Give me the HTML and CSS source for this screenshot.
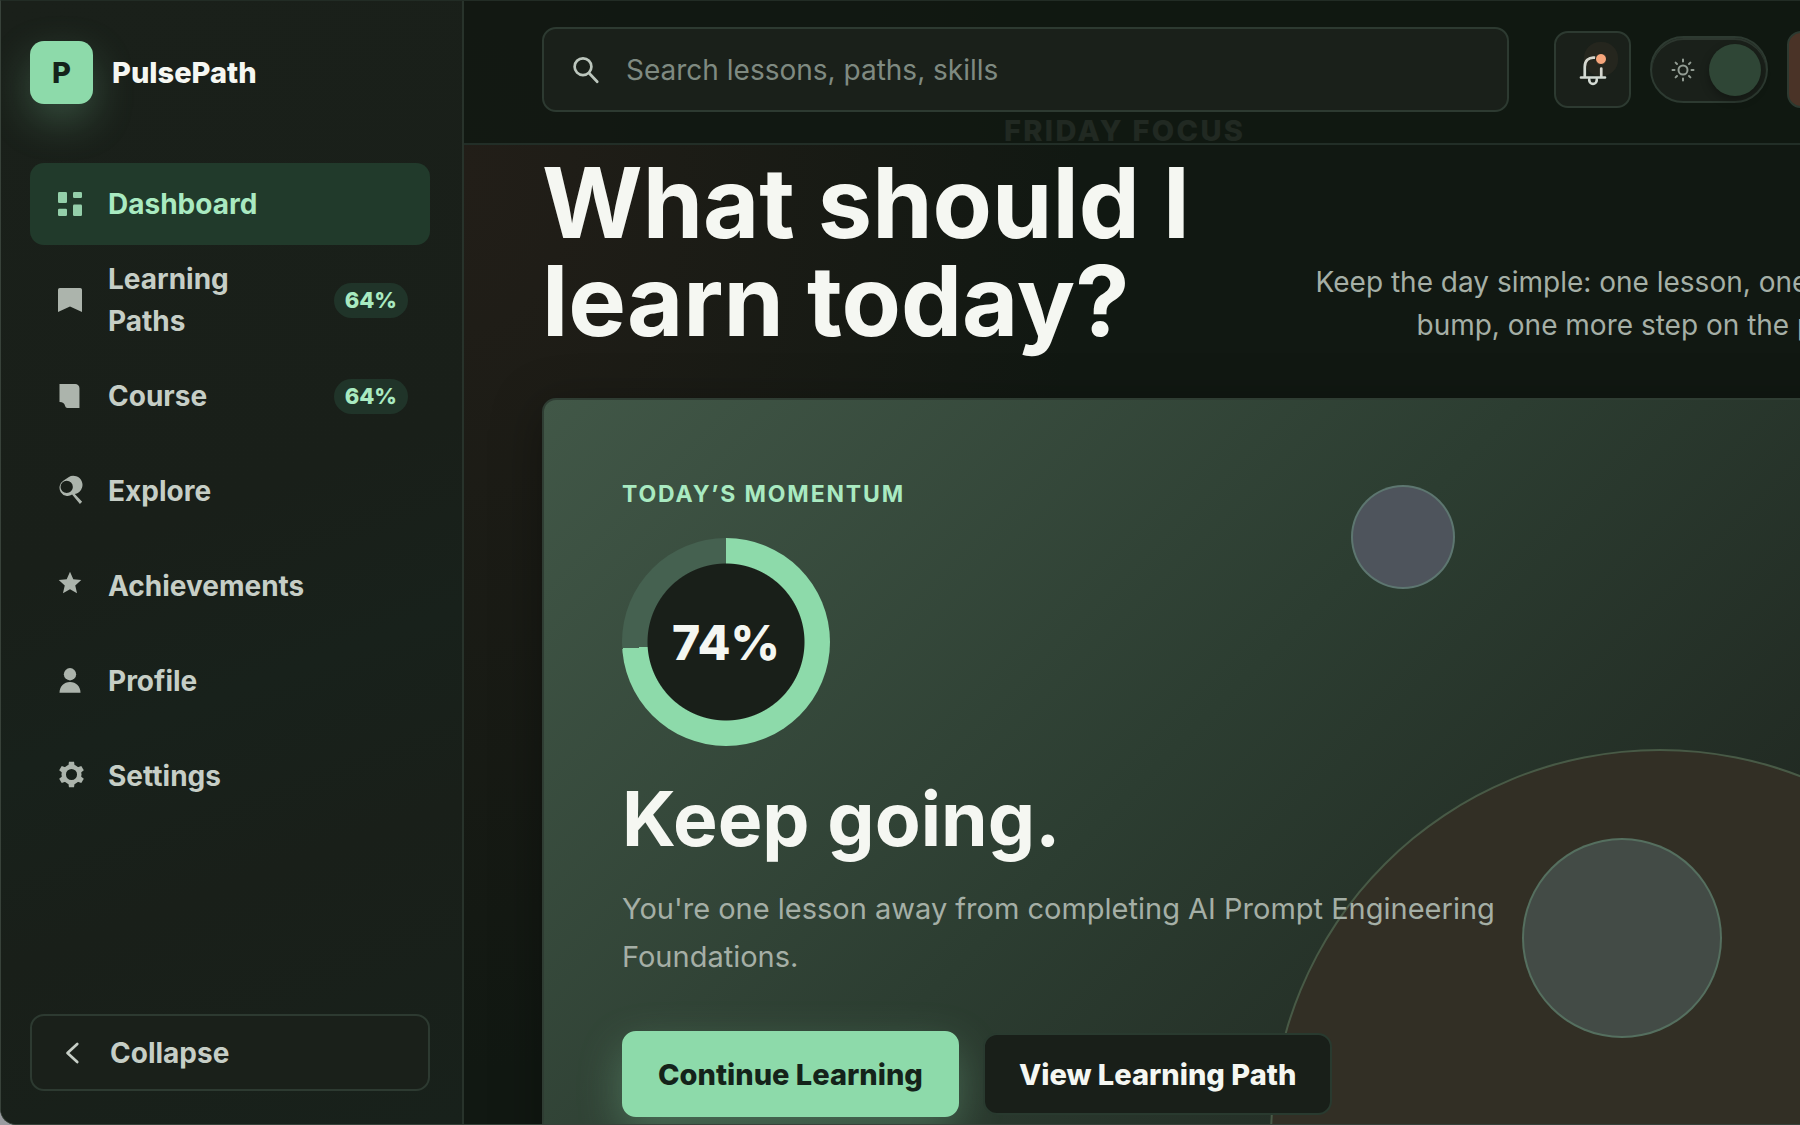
FILE: index.html
```html
<!DOCTYPE html>
<html lang="en">
<head>
  <meta charset="UTF-8">
  <meta name="viewport" content="width=device-width, initial-scale=1.0">
  <title>PulsePath</title>
  <link rel="stylesheet" href="styles.css">
</head>
<body>
  <div class="app">
    <aside class="sidebar">
      <div class="brand">
        <span class="brand-mark">P</span>
        <span class="brand-name">PulsePath</span>
      </div>

      <nav class="nav">
        <a class="nav-item active" href="#dashboard">
          <svg class="icon" viewBox="0 0 24 24"><rect x="4" y="4" width="6" height="7.3" rx=".8"/><rect x="14" y="4" width="6" height="4" rx=".8"/><rect x="4" y="15.2" width="6" height="4.8" rx=".8"/><rect x="14" y="12.3" width="6" height="7.7" rx=".8"/></svg>
          <span class="nav-label">Dashboard</span>
        </a>
        <a class="nav-item" href="#paths">
          <svg class="icon" viewBox="0 0 24 24"><path d="M5.2 4h13.6A1.2 1.2 0 0 1 20 5.2V20l-8-3.6L4 20V5.2A1.2 1.2 0 0 1 5.2 4z"/></svg>
          <span class="nav-label">Learning Paths</span>
          <span class="badge">64%</span>
        </a>
        <a class="nav-item" href="#course">
          <svg class="icon" viewBox="0 0 24 24"><path d="M5 4h10.5a2.8 2.8 0 0 1 2.8 2.8V20H10.200a1.500 1.500 0 0 1-1.400-1.200A3.800 3.800 0 0 0 5 16z"/></svg>
          <span class="nav-label">Course</span>
          <span class="badge">64%</span>
        </a>
        <a class="nav-item" href="#explore">
          <svg class="icon" viewBox="0 0 24 24"><path fill-rule="evenodd" d="M7.5 5.2 11 2.8a6.1 6.1 0 1 1 4.2 11.200l4.900 5.200-1.500 1.500-5.200-6.300A5.200 5.200 0 1 1 7.500 5.200zM9.800 5.200a4.100 4.100 0 1 0 0 8.200 4.100 4.100 0 0 0 0-8.200z"/></svg>
          <span class="nav-label">Explore</span>
        </a>
        <a class="nav-item" href="#achievements">
          <svg class="icon" viewBox="0 0 24 24"><path d="M12 2.500l2.200 5 5.300.5-4 3.600 1.200 5.200L12 14.100l-4.700 2.700 1.200-5.200-4-3.600 5.300-.5z"/></svg>
          <span class="nav-label">Achievements</span>
        </a>
        <a class="nav-item" href="#profile">
          <svg class="icon" viewBox="0 0 24 24"><circle cx="12" cy="7.5" r="4.1"/><path d="M5 19.900c0-4.200 3-7.200 7-7.200s7 3 7 7.200z"/></svg>
          <span class="nav-label">Profile</span>
        </a>
        <a class="nav-item" href="#settings">
          <svg class="icon" viewBox="0 0 24 24">
            <circle class="ring" cx="13" cy="11" r="5.2"/>
            <path id="tooth" d="M10.900 5.400 11.300 2.500h3.400l.4 2.900z"/>
            <use href="#tooth" transform="rotate(60 13 11)"/>
            <use href="#tooth" transform="rotate(120 13 11)"/>
            <use href="#tooth" transform="rotate(180 13 11)"/>
            <use href="#tooth" transform="rotate(240 13 11)"/>
            <use href="#tooth" transform="rotate(300 13 11)"/>
          </svg>
          <span class="nav-label">Settings</span>
        </a>
      </nav>

      <button class="collapse-btn" type="button">
        <svg class="icon line" viewBox="0 0 24 24"><path d="M15.500 6 9 12l6.500 6"/></svg>
        Collapse
      </button>
    </aside>

    <div class="main">
      <header class="topbar">
        <label class="search">
          <svg class="icon line" viewBox="0 0 24 24"><circle cx="10" cy="9.8" r="5.600"/><path d="M14.300 14.300l5.200 5.500"/></svg>
          <input type="search" placeholder="Search lessons, paths, skills" aria-label="Search">
        </label>
        <div class="actions">
          <button class="icon-btn" type="button" aria-label="Notifications">
            <svg class="icon line" viewBox="0 0 24 24"><path d="M13 3.800c-4-.4-6.500 2.200-6.500 6v6.700M17.500 11v5.500M4 17h16M9.500 18.500a2.500 2.800 0 0 0 5 0"/></svg>
            <span class="dot"></span>
          </button>
          <label class="toggle">
            <input type="checkbox" role="switch" aria-label="Dark theme" checked>
            <svg class="sun" viewBox="0 0 24 24"><circle cx="12" cy="12" r="4.500"/><path d="M12 1.500v2M12 20.500v2M1.500 12h2M20.500 12h2M4.600 4.600 6 6M18 18l1.400 1.400M4.600 19.400 6 18M18 6l1.400-1.400"/></svg>
            <span class="knob"></span>
          </label>
          <button class="avatar" type="button" aria-label="Account"></button>
        </div>
      </header>

      <main class="content">
        <p class="eyebrow">Friday focus</p>
        <div class="heading">
          <h1>What should I learn today?</h1>
          <p class="intro">Keep the day simple: one lesson, one tiny bump, one more step on the path.</p>
        </div>

        <section class="hero">
          <span class="orb orb-large"></span>
          <span class="orb orb-small"></span>
          <span class="orb orb-medium"></span>
          <div class="hero-body">
            <p class="hero-kicker">Today’s momentum</p>
            <div class="progress"><strong>74%</strong></div>
            <h2>Keep going.</h2>
            <p class="hero-text">You're one lesson away from completing AI Prompt Engineering Foundations.</p>
            <div class="hero-actions">
              <button class="btn btn-primary" type="button">Continue Learning</button>
              <button class="btn btn-secondary" type="button">View Learning Path</button>
            </div>
          </div>
        </section>
      </main>
    </div>
  </div>
</body>
</html>
```
FILE: styles.css
```css
:root {
  --bg: #111812;
  --surface: #1a201a;
  --border: #2d3a31;
  --text: #f5f7f2;
  --muted: #a5afa6;
  --nav: #c6cec6;
  --mint: #8ddaaa;
  --mint-light: #a9eac1;
  --mint-dark: #213a2b;
  --radius: 14px;
}

* {
  margin: 0;
  padding: 0;
  box-sizing: border-box;
}

body {
  background: #9a9ca0;
  color: var(--text);
  font-family: Inter, sans-serif;
  font-size: 28px;
  overflow: hidden;
}

button,
input {
  font: inherit;
  color: inherit;
}

a {
  color: inherit;
  text-decoration: none;
}

/* the shell is wider than the window, the right side is cut off */
.app {
  display: flex;
  width: 108%;
  height: 100vh;
  background: var(--bg);
  border: 1px solid #38423a;
  border-top-color: #222c25;
  border-right: 0;
  border-radius: 0 0 0 16px;
  overflow: hidden;
}

.icon {
  width: 36px;
  height: 36px;
  flex: none;
  fill: currentColor;
}

.icon.line {
  fill: none;
  stroke: currentColor;
  stroke-width: 1.8;
  stroke-linecap: round;
  stroke-linejoin: round;
}

/* Sidebar */
.sidebar {
  display: flex;
  flex-direction: column;
  flex: none;
  width: 463px;
  padding: 40px 32px 33px 29px;
  background: linear-gradient(160deg, #1a201a 0%, #191f19 45%, #18211b 60%, #191f19 75%, #18211b 100%);
  border-right: 2px solid #28332b;
}

.brand {
  display: flex;
  align-items: center;
  gap: 19px;
  margin-bottom: 59px;
  font-size: 29px;
  font-weight: 800;
}

.brand-mark {
  display: grid;
  place-items: center;
  width: 63px;
  height: 63px;
  border-radius: var(--radius);
  background: var(--mint);
  color: #14231a;
  box-shadow: 0 16px 40px rgba(141, 218, 170, 0.25);
}

.nav {
  display: flex;
  flex-direction: column;
  gap: 13px;
}

.nav-item {
  display: flex;
  align-items: center;
  gap: 20px;
  min-height: 82px;
  padding: 0 22px;
  border-radius: var(--radius);
  color: var(--nav);
  font-weight: 700;
  line-height: 42px;
}

.nav-item .icon {
  opacity: 0.85;
}

.nav-item.active {
  background: var(--mint-dark);
  color: var(--mint-light);
}

.nav-label {
  flex: 1;
  padding-right: 8px;
}

.ring {
  fill: none;
  stroke: currentColor;
  stroke-width: 3;
}

.badge {
  padding: 0 11px;
  border-radius: 18px;
  background: #203429;
  color: var(--mint-light);
  font-size: 22px;
  font-weight: 800;
  line-height: 35px;
}

.collapse-btn {
  display: flex;
  align-items: center;
  gap: 20px;
  height: 77px;
  margin-top: auto;
  padding: 0 22px;
  background: var(--surface);
  border: 2px solid var(--border);
  border-radius: var(--radius);
  color: var(--nav);
  font-weight: 700;
}

/* Top bar */
.main {
  flex: 1;
  min-width: 0;
  background:
    radial-gradient(ellipse 620px 900px at 0 170px, #221e18 0%, rgba(34, 30, 24, 0) 100%),
    var(--bg);
}

.topbar {
  position: relative;
  z-index: 1;
  display: flex;
  align-items: center;
  gap: 45px;
  padding: 26px 80px 31px 78px;
  background: rgba(17, 24, 18, 0.9);
  border-bottom: 2px solid #222e27;
}

.search {
  display: flex;
  align-items: center;
  flex: 1;
  gap: 22px;
  height: 85px;
  padding: 0 24px;
  background: var(--surface);
  border: 2px solid var(--border);
  border-radius: var(--radius);
  color: #bcc6bd;
}

.search input {
  flex: 1;
  background: none;
  border: 0;
  outline: none;
}

.search input::placeholder {
  color: #7f8a81;
}

.actions {
  display: flex;
  align-items: center;
  gap: 19px;
}

.icon-btn,
.avatar {
  position: relative;
  display: grid;
  place-items: center;
  width: 77px;
  height: 77px;
  background: var(--surface);
  border: 2px solid var(--border);
  border-radius: var(--radius);
  color: #d3dad3;
}

.avatar {
  background: #4a3327;
}

.dot {
  position: absolute;
  top: 20px;
  right: 22px;
  width: 12px;
  height: 12px;
  border: 1px solid var(--surface);
  border-radius: 50%;
  background: #f6a57b;
  box-shadow: 0 0 0 11px rgba(246, 165, 123, 0.05);
}

.toggle {
  position: relative;
  display: flex;
  align-items: center;
  justify-content: space-between;
  width: 118px;
  height: 67px;
  padding: 0 5px 0 19px;
  background: var(--surface);
  border: 2px solid var(--border);
  border-radius: 34px;
  box-shadow: inset 0 2px 0 #2d372f;
}

.toggle input {
  position: absolute;
  inset: 0;
  opacity: 0;
}

.sun {
  width: 24px;
  height: 24px;
  fill: none;
  stroke: #929c93;
  stroke-width: 2;
  stroke-linecap: round;
}

.knob {
  width: 52px;
  height: 52px;
  border-radius: 50%;
  background: #2f4636;
  box-shadow: 0 4px 10px rgba(0, 0, 0, 0.3);
}

/* Content */
.content {
  margin-top: -32px;
  padding: 0 80px 0 78px;
}

.eyebrow {
  margin-bottom: 5px;
  padding-left: 462px;
  color: #b6c0b7;
  font-size: 29px;
  font-weight: 800;
  letter-spacing: 0.08em;
  line-height: 36px;
  text-transform: uppercase;
}

.heading {
  display: flex;
  align-items: flex-end;
  justify-content: space-between;
  margin-bottom: 48px;
}

h1 {
  max-width: 760px;
  font-size: 97px;
  font-weight: 700;
  line-height: 98px;
}

.intro {
  max-width: 580px;
  padding-bottom: 3px;
  color: var(--muted);
  line-height: 43px;
  text-align: right;
}

.hero {
  position: relative;
  min-height: 860px;
  padding: 80px 78px;
  background: linear-gradient(135deg, #415747 0%, #2c3d31 45%, #202821 80%, #1d231e 100%);
  border: 2px solid #2f3d33;
  border-radius: var(--radius);
  box-shadow: 0 10px 50px rgba(0, 0, 0, 0.35);
  overflow: hidden;
}

.orb {
  position: absolute;
  border: 2px solid rgba(141, 218, 170, 0.25);
  border-radius: 50%;
}

.orb-large {
  top: 349px;
  right: -188px;
  width: 780px;
  height: 780px;
  background: #322f25;
}

.orb-small {
  top: 85px;
  right: 407px;
  width: 104px;
  height: 104px;
  background: #4e545c;
}

.orb-medium {
  top: 438px;
  right: 140px;
  width: 200px;
  height: 200px;
  background: #434b46;
}

.hero-body {
  position: relative;
}

.hero-kicker {
  color: var(--mint-light);
  font-size: 23px;
  font-weight: 700;
  letter-spacing: 0.08em;
  line-height: 28px;
  text-transform: uppercase;
}

.progress {
  display: grid;
  place-items: center;
  width: 208px;
  height: 208px;
  margin: 30px 0 34px;
  border-radius: 50%;
  background:
    radial-gradient(circle, #191f19 78px, transparent 79px),
    conic-gradient(var(--mint) 74%, #456150 0);
}

.progress strong {
  font-size: 48px;
  font-weight: 800;
}

h2 {
  margin-bottom: 27px;
  font-size: 75px;
  font-weight: 700;
  line-height: 78px;
}

.hero-text {
  max-width: 920px;
  margin-bottom: 50px;
  color: var(--muted);
  font-size: 29px;
  line-height: 48px;
}

.hero-actions {
  display: flex;
  align-items: center;
  gap: 24px;
}

.btn {
  height: 82px;
  padding: 0 34px;
  background: #191f19;
  border: 2px solid #293a2f;
  border-radius: var(--radius);
  font-size: 29px;
  font-weight: 800;
}

.btn-primary {
  height: 86px;
  background: var(--mint);
  border-color: var(--mint);
  color: #14231a;
  box-shadow: 0 16px 44px rgba(141, 218, 170, 0.3);
}
```
